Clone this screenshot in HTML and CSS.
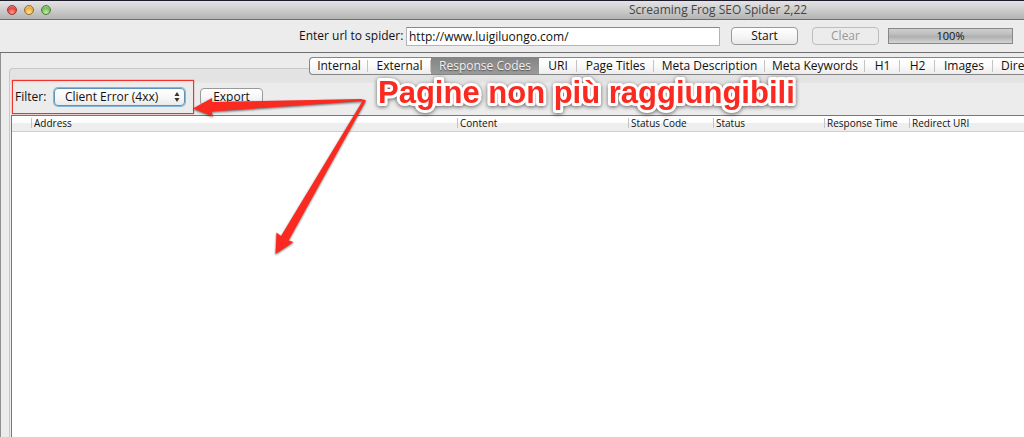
FILE: index.html
```html
<!DOCTYPE html>
<html lang="en">
<head>
<meta charset="utf-8">
<title>Screaming Frog SEO Spider 2,22</title>
<link rel="stylesheet" href="styles.css">
</head>
<body>
<div class="window">
  <header class="titlebar">
    <div class="lights">
      <button class="light red" type="button" aria-label="Close"></button>
      <button class="light amber" type="button" aria-label="Minimize"></button>
      <button class="light green" type="button" aria-label="Zoom"></button>
    </div>
    <h1 class="title">Screaming Frog SEO Spider 2,22</h1>
  </header>
  <form class="toolbar">
    <label for="url">Enter url to spider:</label>
    <input class="url" id="url" type="text" value="http://www.luigiluongo.com/">
    <button class="btn start" type="button">Start</button>
    <button class="btn clear" type="button" disabled>Clear</button>
    <div class="progress" role="progressbar" aria-valuenow="100" aria-label="Progress">100%</div>
  </form>
  <main class="content">
    <nav class="tabs">
      <button class="tab" type="button">Internal</button>
      <button class="tab" type="button">External</button>
      <button class="tab active" type="button">Response Codes</button>
      <button class="tab" type="button">URI</button>
      <button class="tab" type="button">Page Titles</button>
      <button class="tab" type="button">Meta Description</button>
      <button class="tab" type="button">Meta Keywords</button>
      <button class="tab" type="button">H1</button>
      <button class="tab" type="button">H2</button>
      <button class="tab" type="button">Images</button>
      <button class="tab last" type="button">Dire</button>
    </nav>
    <section class="panel">
      <div class="filters">
        <div class="filter">
          <label for="filter">Filter:</label>
          <span class="picker">
            <select id="filter"><option>Client Error (4xx)</option></select>
            <svg class="chevrons" viewBox="0 0 6 10" aria-hidden="true"><path d="M3 0 5.500 4h-5zM3 10 .5 6h5z"/></svg>
          </span>
        </div>
        <button class="btn export" type="button">Export</button>
      </div>
      <div class="results">
        <table>
          <colgroup><col class="c-num"><col class="c-address"><col class="c-content"><col class="c-code"><col class="c-status"><col class="c-time"><col></colgroup>
          <thead>
            <tr><th></th><th>Address</th><th>Content</th><th>Status Code</th><th>Status</th><th>Response Time</th><th>Redirect URI</th></tr>
          </thead>
        </table>
      </div>
    </section>
  </main>
  <svg class="notes" width="1024" height="437" viewBox="0 0 1024 437">
    <g class="arrows">
      <path d="M362 99 212 102 212 98 193 108.500 213 116.500 211.500 111.500 364 101z"/>
      <path d="M363.500 99.500 281 236 276.500 232.500 275.500 254 293.500 242 288.500 240.500 366 100.500z"/>
    </g>
    <text class="callout" x="378" y="103">Pagine non più raggiungibili</text>
  </svg>
</div>
</body>
</html>
```
FILE: styles.css
```css
* { box-sizing: border-box; }
body {
  margin: 0;
  background: #ececec;
  color: #111;
  font: 12px/16px "Open Sans", "Noto Sans", sans-serif;
}
button, input, select { font: inherit; color: inherit; margin: 0; }
.window {
  position: relative;
  display: flex;
  flex-direction: column;
  min-height: 100vh;
  overflow: hidden;
  border-top: 1px solid #1d1a2c;
}
.titlebar {
  display: flex;
  align-items: center;
  height: 19px;
  background: linear-gradient(#e4e4e4, #b4b4b4);
  border-bottom: 1px solid #707070;
}
.lights { display: flex; gap: 7px; width: 629px; padding-left: 7px; flex: none; }
.light {
  width: 10px;
  height: 10px;
  padding: 0;
  border: 1px solid;
  border-radius: 50%;
}
.red { background: radial-gradient(circle at 50% 80%, #ff9a90, #e5403e 60%, #f4b0b0); border-color: #963634; }
.amber { background: radial-gradient(circle at 50% 80%, #ffe590, #eda63c 60%, #f6d8a0); border-color: #986a30; }
.green { background: radial-gradient(circle at 50% 80%, #c8f0a0, #72b858 60%, #c0dfb4); border-color: #4c7c3c; }
.title { margin: 0; font-size: 12px; font-weight: 400; color: #444; white-space: nowrap; }
.toolbar {
  display: flex;
  align-items: center;
  height: 33px;
  padding-left: 299px;
  border-bottom: 1px solid #6e6e6e;
  white-space: nowrap;
}
.toolbar label { width: 107px; flex: none; }
.url {
  width: 314px;
  height: 19px;
  flex: none;
  padding: 0 2px;
  background: #fff;
  border: 1px solid #b4b4b4;
  border-top-color: #888;
}
.btn {
  height: 18px;
  padding: 0;
  flex: none;
  line-height: 16px;
  background: linear-gradient(#fff, #f6f6f6 50%, #e9e9e9);
  border: 1px solid #999;
  border-radius: 4px;
}
.start { width: 67px; margin-left: 11px; }
.clear { width: 67px; margin-left: 14px; color: #999; background: #ececec; border-color: #bebebe; }
.progress {
  width: 125px;
  height: 16px;
  flex: none;
  margin-left: 9px;
  border: 1px solid #888;
  background: linear-gradient(#cfcfcf, #bababa 45%, #adadad 50%, #d4d4d4);
  font-size: 11px;
  line-height: 14px;
  text-align: center;
}
.content {
  flex: 1;
  display: flex;
  flex-direction: column;
  padding: 4px 0 0 8px;
  border-left: 1px solid #909090;
}
.tabs {
  z-index: 1;
  display: grid;
  grid-template-columns: 58px 63px 108px 38px 77px 111px 100px 35px 35px 58px 1fr;
  margin-left: 300px;
  background: linear-gradient(#fff, #fafafa 50%, #ececec);
  border: 1px solid #858585;
  border-right: 0;
  border-radius: 4px 0 0 4px;
}
.tab {
  height: 16px;
  padding: 0;
  border: 0;
  background: linear-gradient(#c4c4c4, #c4c4c4) right center / 1px 12px no-repeat;
  line-height: 16px;
  white-space: nowrap;
}
.tab.active {
  background: linear-gradient(#858585, #9a9a9a);
  color: #f2f2f2;
  text-shadow: 0 1px 1px #555;
}
.tab.last { padding-left: 8px; background: none; text-align: left; }
.panel {
  flex: 1;
  display: flex;
  flex-direction: column;
  margin-top: -7px;
  padding: 11px 0 0 2px;
  border: 1px solid #c8c8c8;
  border-width: 1px 0 0 1px;
  border-radius: 4px 0 0 0;
  background: linear-gradient(#e3e3e3 13px, #ececec 14px);
}
.filters { display: flex; align-items: center; gap: 6px; }
.filter {
  display: flex;
  align-items: center;
  width: 182px;
  height: 34px;
  padding-left: 2px;
  border: 1px solid #f5312b;
  box-shadow: 0 0 1px #f5312b;
}
.filter label { width: 39px; flex: none; }
.picker { display: grid; align-items: center; }
.picker > * { grid-area: 1 / 1; }
.picker select {
  appearance: none;
  width: 131px;
  height: 18px;
  padding: 0 10px;
  line-height: 16px;
  border: 1px solid #5b93bd;
  border-radius: 4px;
  box-shadow: 0 0 0 1px #86b6dc;
  background: linear-gradient(#fff, #f8f8f8 50%, #eaeaea);
}
.chevrons { width: 6px; height: 10px; justify-self: end; margin-right: 5px; fill: #333; pointer-events: none; }
.export { width: 63px; }
.results {
  flex: 1;
  margin-top: 1px;
  margin-left: -1px;
  background: #fff;
  border: 1px solid #777;
  border-width: 1px 0 0 1px;
}
table { width: 100%; table-layout: fixed; border-collapse: collapse; }
.c-num { width: 19px; }
.c-address { width: 426px; }
.c-content { width: 171px; }
.c-code { width: 85px; }
.c-status { width: 111px; }
.c-time { width: 85px; }
th {
  height: 15px;
  padding: 0 0 0 3px;
  font-size: 10px;
  line-height: 14px;
  font-weight: 400;
  text-align: left;
  white-space: nowrap;
  background: linear-gradient(#c4c4c4, #c4c4c4) left center / 1px 10px no-repeat, linear-gradient(#fff 50%, #eee 50%);
  border-bottom: 1px solid #cfcfcf;
}
th:first-child { background: linear-gradient(#fff 50%, #eee 50%); }
.notes { position: absolute; left: 0; top: -1px; z-index: 2; pointer-events: none; }
.arrows { fill: #fb2a20; filter: drop-shadow(0 1px 1px rgba(0, 0, 0, .6)); }
.callout {
  font: bold 31px "Liberation Sans", Arial, sans-serif;
  fill: #fb2a20;
  stroke: #fff;
  stroke-width: 6px;
  stroke-linejoin: round;
  paint-order: stroke;
  filter: drop-shadow(0 1px 2px rgba(0, 0, 0, .6));
}
```
